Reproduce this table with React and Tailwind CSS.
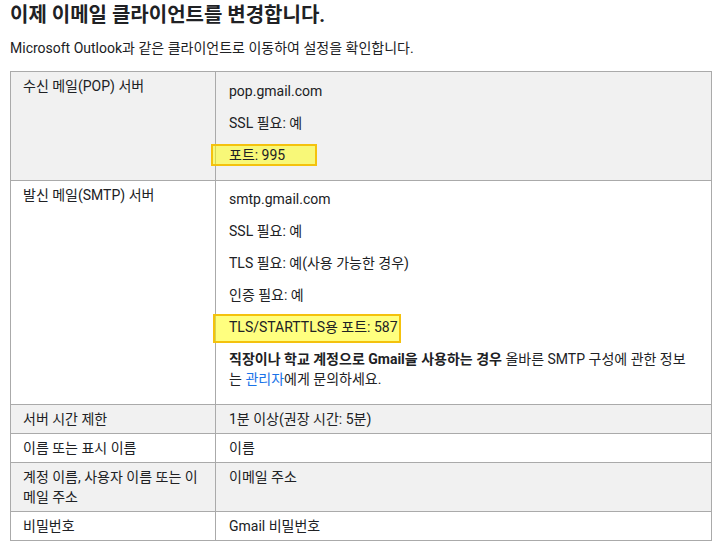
const font = { fontFamily: 'Roboto, "Noto Sans CJK KR", sans-serif' };

function Mark({ className }) {
  return (
    <span
      className={
        'pointer-events-none absolute border-2 border-[#f4c20d] bg-[rgba(255,255,0,0.5)] ' +
        className
      }
    />
  );
}

const rows = [
  { label: '서버 시간 제한', value: '1분 이상(권장 시간: 5분)', gray: true },
  { label: '이름 또는 표시 이름', value: '이름', gray: false },
  { label: '계정 이름, 사용자 이름 또는 이메일 주소', value: '이메일 주소', gray: true },
  { label: '비밀번호', value: 'Gmail 비밀번호', gray: false },
];

export default function App() {
  return (
    <div className="min-h-[551px] bg-white px-[10px] pt-[2px] text-[#202124]" style={font}>
      <h2 className="text-[20px] font-bold leading-[26px]">이제 이메일 클라이언트를 변경합니다.</h2>
      <p className="mt-[10px] text-[14px] leading-[20px]">
        Microsoft Outlook과 같은 클라이언트로 이동하여 설정을 확인합니다.
      </p>

      <table className="mt-[13px] w-[702px] table-fixed border-collapse text-[14px] leading-[20px]">
        <colgroup>
          <col className="w-[205px]" />
          <col />
        </colgroup>
        <tbody>
          {/* incoming */}
          <tr className="bg-[#f1f1f1]">
            <td className="border border-[#aaa] px-[12px] pt-[4px] pb-[4px] align-top">
              수신 메일(POP) 서버
            </td>
            <td className="border border-[#aaa] px-[13px] pt-[9px] pb-[15px] align-top">
              <div className="flex flex-col gap-[12px]">
                <p>pop.gmail.com</p>
                <p>SSL 필요: 예</p>
                <p className="relative">
                  <Mark className="-left-[18px] -top-[1px] h-[22px] w-[106px]" />
                  <span className="relative">포트: 995</span>
                </p>
              </div>
            </td>
          </tr>

          {/* outgoing */}
          <tr className="bg-white">
            <td className="border border-[#aaa] px-[12px] pt-[4px] pb-[4px] align-top">
              발신 메일(SMTP) 서버
            </td>
            <td className="border border-[#aaa] px-[13px] pt-[8px] pb-[15px] align-top">
              <div className="flex flex-col gap-[12px]">
                <p>smtp.gmail.com</p>
                <p>SSL 필요: 예</p>
                <p>TLS 필요: 예(사용 가능한 경우)</p>
                <p>인증 필요: 예</p>
                <p className="relative">
                  <Mark className="-left-[16px] -top-[3px] h-[29px] w-[188px]" />
                  <span className="relative">TLS/STARTTLS용 포트: 587</span>
                </p>
                <p>
                  <b>직장이나 학교 계정으로 Gmail을 사용하는 경우</b> 올바른 SMTP 구성에 관한 정보는{' '}
                  <a href="#" className="text-[#1a73e8]">관리자</a>에게 문의하세요.
                </p>
              </div>
            </td>
          </tr>

          {rows.map((row) => (
            <tr key={row.label} className={row.gray ? 'bg-[#f1f1f1]' : 'bg-white'}>
              <td className="border border-[#aaa] px-[12px] py-[4px] align-top">{row.label}</td>
              <td className="border border-[#aaa] px-[13px] py-[4px] align-top">{row.value}</td>
            </tr>
          ))}
        </tbody>
      </table>
    </div>
  );
}
